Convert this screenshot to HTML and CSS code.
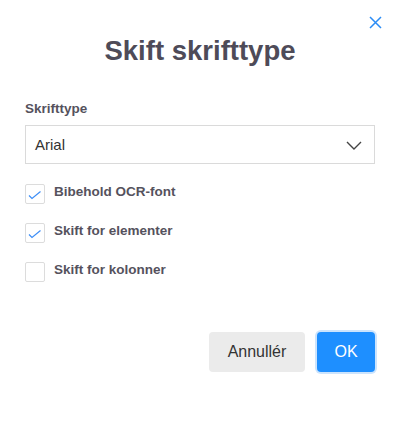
FILE: index.html
```html
<!DOCTYPE html>
<html lang="da">
<head>
	<meta charset="utf-8">
	<title>Skift skrifttype</title>
	<link rel="stylesheet" href="styles.css">
</head>
<body>
<div class="dialog">
	<button class="close" type="button" aria-label="Luk">
		<svg width="13" height="13" viewBox="0 0 13 13"><path d="M1 1L12 12M12 1L1 12" stroke="#2b8cf5" stroke-width="1.5" fill="none"/></svg>
	</button>

	<h1 class="title">Skift skrifttype</h1>

	<div class="field">
		<label class="field-label">Skrifttype</label>
		<div class="select">
			<span>Arial</span>
			<svg width="16" height="9" viewBox="0 0 16 9"><path d="M1 1L8 8L15 1" stroke="#444" stroke-width="1.4" fill="none"/></svg>
		</div>
	</div>

	<div class="options">
		<!-- checked boxes -->
		<div class="option">
			<span class="box">
				<svg width="20" height="20" viewBox="0 0 20 20"><path d="M4 11.5L7 14.5L15.5 7.5" stroke="#3d8ef7" stroke-width="1.2" fill="none"/></svg>
			</span>
			<span class="option-label">Bibehold OCR-font</span>
		</div>
		<div class="option">
			<span class="box">
				<svg width="20" height="20" viewBox="0 0 20 20"><path d="M4 11.5L7 14.5L15.5 7.5" stroke="#3d8ef7" stroke-width="1.2" fill="none"/></svg>
			</span>
			<span class="option-label">Skift for elementer</span>
		</div>
		<div class="option">
			<span class="box"></span>
			<span class="option-label">Skift for kolonner</span>
		</div>
	</div>

	<div class="actions">
		<button class="btn btn-cancel" type="button">Annullér</button>
		<button class="btn btn-ok" type="button">OK</button>
	</div>
</div>
</body>
</html>
```

FILE: styles.css
```css
html { font-family: "Liberation Sans", Arial, sans-serif; background-color: white; }
body { margin: 0; }
.dialog {
	position: relative;
	width: 400px;
	height: 424px;
	padding: 35px 25px 0;
	box-sizing: border-box;
	background-color: white;
}
.close {
	position: absolute;
	top: 16px;
	right: 18px;
	padding: 0;
	border: none;
	background: none;
	width: 13px;
	height: 13px;
	line-height: 0;
}
.title {
	margin: 0;
	text-align: center;
	font-size: 27.5px;
	line-height: 32px;
	font-weight: bold;
	color: #4e4b58;
}
.field { margin-top: 34px; }
.field-label {
	display: block;
	font-size: 13.5px;
	line-height: 16px;
	font-weight: bold;
	color: #55525d;
}
.select {
	display: flex;
	align-items: center;
	justify-content: space-between;
	margin-top: 8px;
	height: 39px;
	padding: 0 12px 0 9px;
	border: 1px solid #dadada;
	box-sizing: border-box;
	font-size: 15px;
	color: #333;
}
.select svg { margin-top: 1px; }
.options {
	display: flex;
	flex-direction: column;
	gap: 19px;
	margin-top: 20px;
}
.option { display: flex; align-items: flex-start; gap: 9px; }
.box {
	width: 20px;
	height: 20px;
	border: 1px solid #dcdcdc;
	border-radius: 2px;
	box-sizing: border-box;
	line-height: 0;
}
.box svg { margin: -1px; }
.option-label {
	font-size: 13.5px;
	line-height: 16px;
	font-weight: bold;
	color: #55525d;
}
.actions {
	display: flex;
	justify-content: flex-end;
	gap: 12px;
	margin-top: 50px;
}
.btn {
	height: 40px;
	border: none;
	border-radius: 4px;
	font-family: inherit;
	font-size: 16px;
	cursor: pointer;
}
.btn-cancel {
	width: 96px;
	background-color: #ebebeb;
	color: #333;
}
.btn-ok {
	width: 58px;
	background-color: #1e8fff;
	color: white;
	box-shadow: 0 0 0 2px #cce4fd;
}
```
